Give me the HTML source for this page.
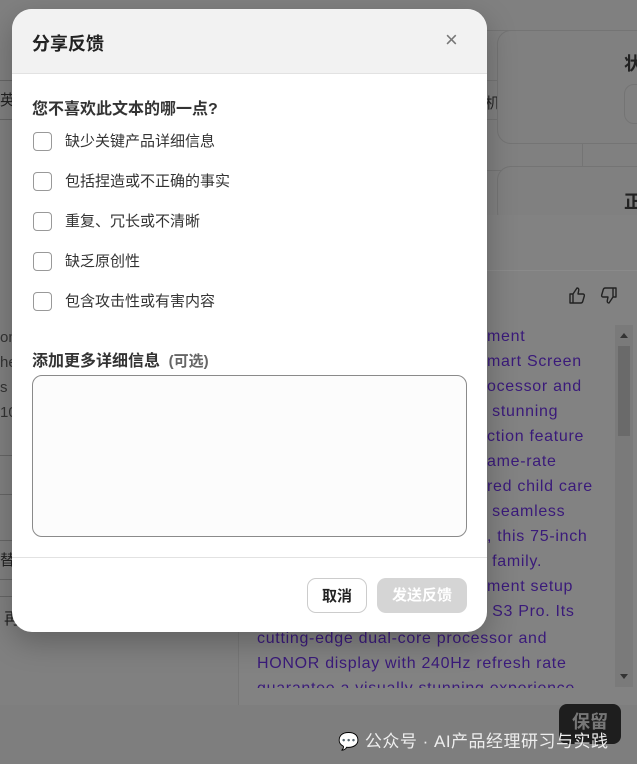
<!DOCTYPE html>
<html><head><meta charset="utf-8"><style>
*{box-sizing:border-box;margin:0;padding:0}
body{width:637px;height:764px;overflow:hidden;background:#808080;font-family:"Liberation Sans","Noto Sans CJK SC",sans-serif;position:relative}
.a{position:absolute}
.card{position:absolute;border:1px solid #747474;border-radius:14px;background:#808080}
.txt{position:absolute;left:257px;top:326px;width:360px;color:#3a1a7a;font-size:16px;letter-spacing:0.7px;line-height:25px;white-space:nowrap}
.modal{position:absolute;left:12px;top:9px;width:475px;height:623px;background:#fff;border-radius:20px;overflow:hidden;box-shadow:0 10px 30px rgba(0,0,0,.25)}
.hd{height:65px;background:#f2f2f2;border-bottom:1px solid #e2e2e2;position:relative}
.hd b{position:absolute;left:20px;top:21px;font-size:18px;color:#222}
.x{position:absolute;left:433px;top:18px;font-size:22px;color:#777}
.q{position:absolute;left:20px;top:86px;font-size:16px;font-weight:bold;color:#333}
.opt{position:absolute;left:21px;font-size:15px;color:#333;height:20px;line-height:20px}
.opt i{display:inline-block;width:19px;height:19px;border:1px solid #999;border-radius:4px;vertical-align:top;margin-right:13px}
.ta{position:absolute;left:20px;top:366px;width:435px;height:162px;border:1px solid #8a8a8a;border-radius:10px;background:#fcfcfc}
.ft{position:absolute;left:0;top:548px;width:475px;border-top:1px solid #e2e2e2}
.btn{position:absolute;top:569px;height:35px;border-radius:9px;font-size:15px;font-weight:bold;text-align:center;line-height:35px}
</style></head><body>
<div class="card" style="left:380px;top:30px;width:203px;height:200px"></div>
<div class="card" style="left:392px;top:80px;width:171px;height:40px;border-radius:10px"></div>
<div class="a" style="left:470px;top:92px;font-size:15px;color:#222">视机</div>
<div class="card" style="left:392px;top:170px;width:171px;height:60px;border-radius:10px"></div>
<div class="a" style="left:527px;top:184px;font-size:15px;color:#222;font-weight:bold">&lt;/&gt;</div>
<div class="card" style="left:497px;top:30px;width:160px;height:114px"></div>
<div class="a" style="left:624px;top:50px;font-size:18px;font-weight:bold;color:#222">状</div>
<div class="card" style="left:624px;top:84px;width:30px;height:40px;border-radius:10px"></div>
<div class="card" style="left:497px;top:166px;width:160px;height:60px"></div>
<div class="a" style="left:624px;top:188px;font-size:18px;font-weight:bold;color:#222">正</div>
<div class="a" style="left:238px;top:215px;width:410px;height:490px;background:#828282;border-radius:14px 0 0 0;border-left:1px solid #777"></div>
<div class="a" style="left:238px;top:270px;width:410px;height:1px;background:#8a8a8a"></div>
<svg class="a" style="left:568px;top:286px" width="50" height="20" viewBox="0 0 50 20" fill="none" stroke="#222" stroke-width="1.4" stroke-linejoin="round">
<path d="M2 8h3v9H2z M5 8l4-6c1.5 0 2 1 1.7 2.5L10 8h5c1 0 1.6 1 1.3 2l-1.6 5.5c-.3 1-1 1.5-2 1.5H5"/>
<path d="M48 11h-3V2h3z M45 11l-4 6c-1.5 0-2-1-1.7-2.5L40 11h-5c-1 0-1.6-1-1.3-2l1.6-5.5c.3-1 1-1.5 2-1.5H45"/>
</svg>
<div class="a" style="left:615px;top:325px;width:18px;height:362px;background:#7a7a7a"></div>
<div class="a" style="left:618px;top:346px;width:12px;height:90px;background:#6a6a6a"></div>
<div class="a" style="left:620px;top:333px;width:0;height:0;border:4px solid transparent;border-bottom:5px solid #333;border-top:0"></div>
<div class="a" style="left:620px;top:674px;width:0;height:0;border:4px solid transparent;border-top:5px solid #333;border-bottom:0"></div>
<div class="txt">&nbsp;<br>&nbsp;<br>&nbsp;<br>&nbsp;<br>&nbsp;<br>&nbsp;<br>&nbsp;<br>&nbsp;<br>&nbsp;<br>&nbsp;<br>&nbsp;<br>&nbsp;<br>cutting-edge dual-core processor and<br>HONOR display with 240Hz refresh rate<br><span style="display:inline-block;height:12px;overflow:hidden;vertical-align:top">guarantee a visually stunning experience</span></div>
<div class="txt" style="left:487px;line-height:25px;top:324px">ment<br>mart Screen<br>ocessor and<br>&nbsp;stunning<br>ction feature<br>ame-rate<br>red child care<br>&nbsp;seamless<br>, this 75-inch<br>&nbsp;family.<br>ment setup<br>&nbsp;S3 Pro. Its</div>
<div class="a" style="left:0;top:80px;width:20px;height:40px;border-top:1px solid #666;border-bottom:1px solid #666;font-size:15px;color:#222;line-height:40px">英</div>
<div class="a" style="left:0;top:325px;font-size:15px;line-height:25px;color:#333">om<br>he<br>s s<br>10</div>
<div class="a" style="left:0;top:455px;width:20px;border-top:1px solid #666;height:40px;border-bottom:1px solid #666"></div>
<div class="a" style="left:0;top:540px;width:20px;border-top:1px solid #666;height:40px;border-bottom:1px solid #666;font-size:15px;line-height:40px;color:#222">替</div>
<div class="a" style="left:0;top:596px;width:220px;height:36px;font-size:16px;color:#222;padding:8px 4px;border-top:1px solid #666">再</div>
<div class="a" style="left:0;top:705px;width:637px;height:59px;background:#7e7e7e"></div>
<div class="a" style="left:559px;top:704px;width:62px;height:40px;background:#1e1e1e;border-radius:8px;color:#777;font-weight:bold;font-size:18px;text-align:center;line-height:36px">保留</div>
<div class="a" style="left:338px;top:727px;font-size:17px;color:#eee;letter-spacing:0.5px">💬 公众号 · AI产品经理研习与实践</div>
<div class="modal">
<div class="hd"><b>分享反馈</b><span class="x">×</span></div>
<div class="q">您不喜欢此文本的哪一点?</div>
<div class="opt" style="top:123px"><i></i>缺少关键产品详细信息</div>
<div class="opt" style="top:163px"><i></i>包括捏造或不正确的事实</div>
<div class="opt" style="top:203px"><i></i>重复、冗长或不清晰</div>
<div class="opt" style="top:243px"><i></i>缺乏原创性</div>
<div class="opt" style="top:283px"><i></i>包含攻击性或有害内容</div>
<div class="q" style="top:338px">添加更多详细信息 <span style="color:#666;font-size:15px">&nbsp;(可选)</span></div>
<div class="ta"></div>
<div class="ft"></div>
<div class="btn" style="left:295px;width:60px;border:1px solid #ccc;color:#222;background:#fff">取消</div>
<div class="btn" style="left:365px;width:90px;background:#d5d5d5;color:#fff">发送反馈</div>
</div>
</body></html>
